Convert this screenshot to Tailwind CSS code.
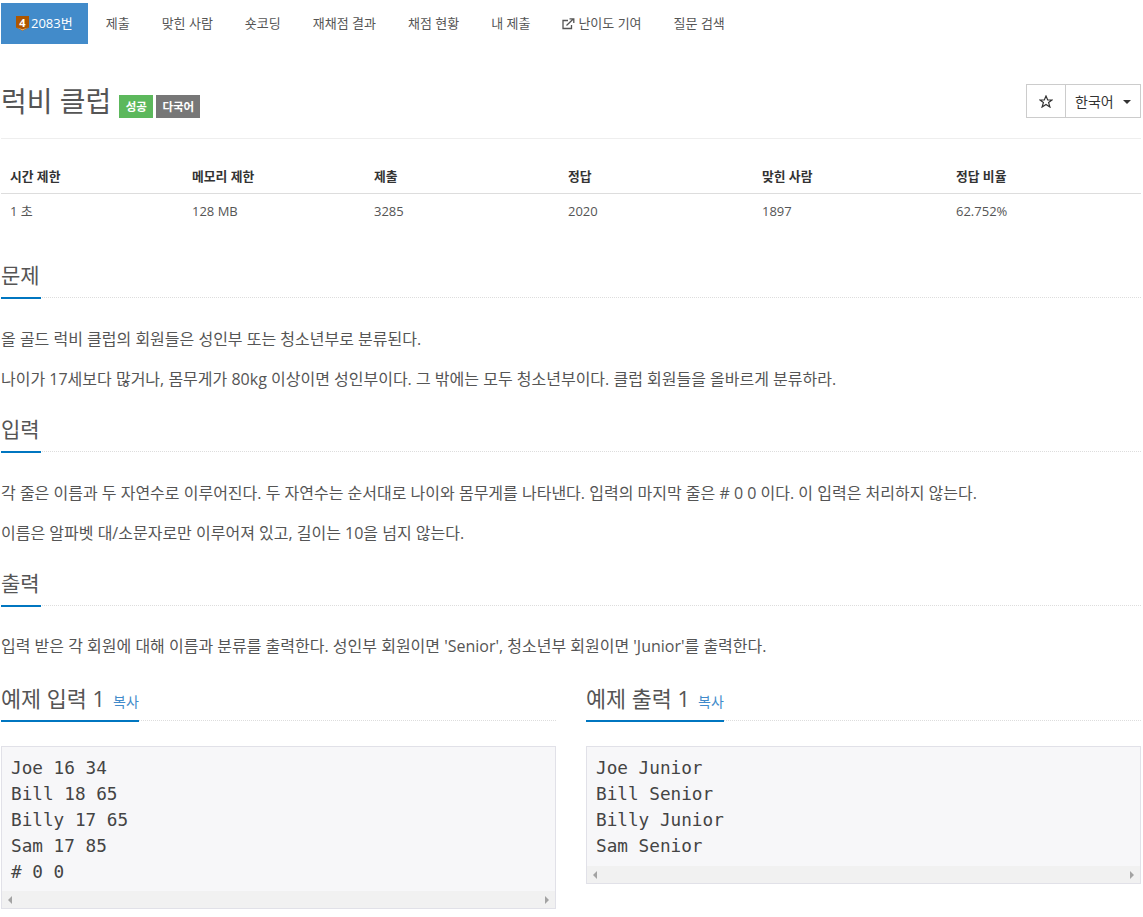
<!DOCTYPE html>
<html lang="ko"><head><meta charset="utf-8"><script src="https://cdn.jsdelivr.net/npm/@tailwindcss/browser@4"></script></head>
<body class="bg-white overflow-hidden font-['Open_Sans','Noto_Sans_CJK_KR',sans-serif] text-[#555]">
<div class="w-[1140px] ml-px h-[917px]">
<nav class="flex pt-[3px] h-[44px] text-[13px] text-[#555]">
  <a class="flex items-center gap-[2px] px-[15px] bg-[#428bca] text-white">
    <svg width="13" height="15" viewBox="0 0 13 15"><path d="M0 0H13V11.5L6.5 14.8L0 11.5Z" fill="#ad5600"/><path d="M1 11.5L6.5 13.2L12 11.5L6.5 14.6Z" fill="#e8b070"/><text x="6.5" y="10.5" text-anchor="middle" font-size="11" font-weight="700" fill="#fff" font-family="Open Sans">4</text></svg>
    2083번</a>
  <a class="flex items-center px-[15px] ml-[3px]">제출</a>
  <a class="flex items-center px-[15px] ml-[2px]">맞힌 사람</a>
  <a class="flex items-center px-[15px] ml-[2px]">숏코딩</a>
  <a class="flex items-center px-[15px] ml-[2px]">재채점 결과</a>
  <a class="flex items-center px-[15px] ml-[2px]">채점 현황</a>
  <a class="flex items-center px-[15px] ml-[2px]">내 제출</a>
  <a class="flex items-center gap-[3px] px-[15px] ml-[2px]">
    <svg width="13" height="12" viewBox="0 0 13 12" fill="none" stroke="#555" stroke-width="1.3"><path d="M9.5 7V10.5H1V2.5H6"/><path d="M4.5 7.5L11 1.2M7.5 0.8H11.8V5" /></svg>
    난이도 기여</a>
  <a class="flex items-center px-[15px] ml-[2px]">질문 검색</a>
</nav>
<div class="flex items-start justify-between h-[59px] mt-[35px] border-b border-[#eee] box-content">
  <h1 class="flex items-center text-[28px] leading-[40px] text-[#555] font-normal mt-[2px]">럭비 클럽
    <span class="ml-[8px] mt-[11px] h-[23px] w-[34px] flex items-center justify-center bg-[#5cb85c] text-white text-[11.5px] font-bold">성공</span>
    <span class="ml-[3px] mt-[11px] h-[23px] w-[44px] flex items-center justify-center bg-[#777] text-white text-[11.5px] font-bold">다국어</span>
  </h1>
  <div class="flex h-[34px] mt-[5px] border border-[#ccc] text-[14px] text-[#333]">
    <span class="w-[39px] flex items-center justify-center border-r border-[#ccc]">
      <svg width="14" height="13" viewBox="0 0 14 13" fill="none" stroke="#333" stroke-width="1.2"><path d="M7 1L8.7 5H13L9.6 7.6L10.9 12L7 9.4L3.1 12L4.4 7.6L1 5H5.3Z"/></svg>
    </span>
    <span class="w-[74px] flex items-center pl-[9px] relative">한국어
      <span class="absolute right-[9px] top-[15px] border-x-[4px] border-x-transparent border-t-[4px] border-t-[#333]"></span>
    </span>
  </div>
</div>
<div class="mt-[20px] grid grid-cols-[182px_182px_194px_194px_194px_194px] text-[13px]">
  <div class="contents font-bold text-[12.8px] text-[#333]">
    <div class="h-[35px] pl-[9px] pt-[2px] flex items-center border-b border-[#ddd]">시간 제한</div>
    <div class="h-[35px] pl-[9px] pt-[2px] flex items-center border-b border-[#ddd]">메모리 제한</div>
    <div class="h-[35px] pl-[9px] pt-[2px] flex items-center border-b border-[#ddd]">제출</div>
    <div class="h-[35px] pl-[9px] pt-[2px] flex items-center border-b border-[#ddd]">정답</div>
    <div class="h-[35px] pl-[9px] pt-[2px] flex items-center border-b border-[#ddd]">맞힌 사람</div>
    <div class="h-[35px] pl-[9px] pt-[2px] flex items-center border-b border-[#ddd]">정답 비율</div>
  </div>
  <div class="h-[36px] pl-[9px] flex items-center">1 초</div>
  <div class="h-[36px] pl-[9px] flex items-center">128 MB</div>
  <div class="h-[36px] pl-[9px] flex items-center">3285</div>
  <div class="h-[36px] pl-[9px] flex items-center">2020</div>
  <div class="h-[36px] pl-[9px] flex items-center">1897</div>
  <div class="h-[36px] pl-[9px] flex items-center">62.752%</div>
</div>

<section class="mt-[33px]">
  <div class="h-[35px] border-b border-dotted border-[#ddd]"><h2 class="inline-block align-top h-[36px] border-b-2 border-[#0076c0] text-[21px] leading-[25px] font-normal text-[#555] w-[40px]">문제</h2></div>
  <p class="mt-[27px] text-[16px] leading-[28px]">올 골드 럭비 클럽의 회원들은 성인부 또는 청소년부로 분류된다.</p>
  <p class="mt-[12px] text-[16px] leading-[28px]">나이가 17세보다 많거나, 몸무게가 80kg 이상이면 성인부이다. 그 밖에는 모두 청소년부이다. 클럽 회원들을 올바르게 분류하라.</p>
</section>
<section class="mt-[24px]">
  <div class="h-[35px] border-b border-dotted border-[#ddd]"><h2 class="inline-block align-top h-[36px] border-b-2 border-[#0076c0] text-[21px] leading-[25px] font-normal text-[#555] w-[40px]">입력</h2></div>
  <p class="mt-[27px] text-[16px] leading-[28px]">각 줄은 이름과 두 자연수로 이루어진다. 두 자연수는 순서대로 나이와 몸무게를 나타낸다. 입력의 마지막 줄은 # 0 0 이다. 이 입력은 처리하지 않는다.</p>
  <p class="mt-[12px] text-[16px] leading-[28px]">이름은 알파벳 대/소문자로만 이루어져 있고, 길이는 10을 넘지 않는다.</p>
</section>
<section class="mt-[24px]">
  <div class="h-[35px] border-b border-dotted border-[#ddd]"><h2 class="inline-block align-top h-[36px] border-b-2 border-[#0076c0] text-[21px] leading-[25px] font-normal text-[#555] w-[40px]">출력</h2></div>
  <p class="mt-[26px] text-[16px] leading-[28px]">입력 받은 각 회원에 대해 이름과 분류를 출력한다. 성인부 회원이면 'Senior', 청소년부 회원이면 'Junior'를 출력한다.</p>
</section>
<div class="mt-[26px] grid grid-cols-[555px_555px] gap-x-[30px]">
  <div>
    <div class="h-[35px] border-b border-dotted border-[#ddd]"><h2 class="inline-flex align-top items-baseline gap-[8px] h-[36px] border-b-2 border-[#0076c0] text-[21.8px] leading-[25px] font-normal text-[#555] w-[138px]">예제 입력 1 <span class="text-[14px] text-[#428bca]">복사</span></h2></div>
    <div class="mt-[25px] border border-[#e1e1e8] bg-[#f7f7f9]">
      <pre class="font-['DejaVu_Sans_Mono',monospace] text-[17.7px] leading-[25.9px] text-[#444] pt-[9px] pb-[8px] pl-[9px] h-[144px]">Joe 16 34
Bill 18 65
Billy 17 65
Sam 17 85
# 0 0</pre>
      <div class="h-[17px] bg-[#f1f1f1] flex items-center justify-between px-[6px]"><span class="border-y-[4px] border-y-transparent border-r-[4px] border-r-[#a3a3a3]"></span><span class="border-y-[4px] border-y-transparent border-l-[4px] border-l-[#a3a3a3]"></span></div>
    </div>
  </div>
  <div>
    <div class="h-[35px] border-b border-dotted border-[#ddd]"><h2 class="inline-flex align-top items-baseline gap-[8px] h-[36px] border-b-2 border-[#0076c0] text-[21.8px] leading-[25px] font-normal text-[#555] w-[138px]">예제 출력 1 <span class="text-[14px] text-[#428bca]">복사</span></h2></div>
    <div class="mt-[25px] border border-[#e1e1e8] bg-[#f7f7f9]">
      <pre class="font-['DejaVu_Sans_Mono',monospace] text-[17.7px] leading-[25.9px] text-[#444] pt-[9px] pb-[8px] pl-[9px] h-[119px]">Joe Junior
Bill Senior
Billy Junior
Sam Senior</pre>
      <div class="h-[17px] bg-[#f1f1f1] flex items-center justify-between px-[6px]"><span class="border-y-[4px] border-y-transparent border-r-[4px] border-r-[#a3a3a3]"></span><span class="border-y-[4px] border-y-transparent border-l-[4px] border-l-[#a3a3a3]"></span></div>
    </div>
  </div>
</div>
</div>
</body></html>
